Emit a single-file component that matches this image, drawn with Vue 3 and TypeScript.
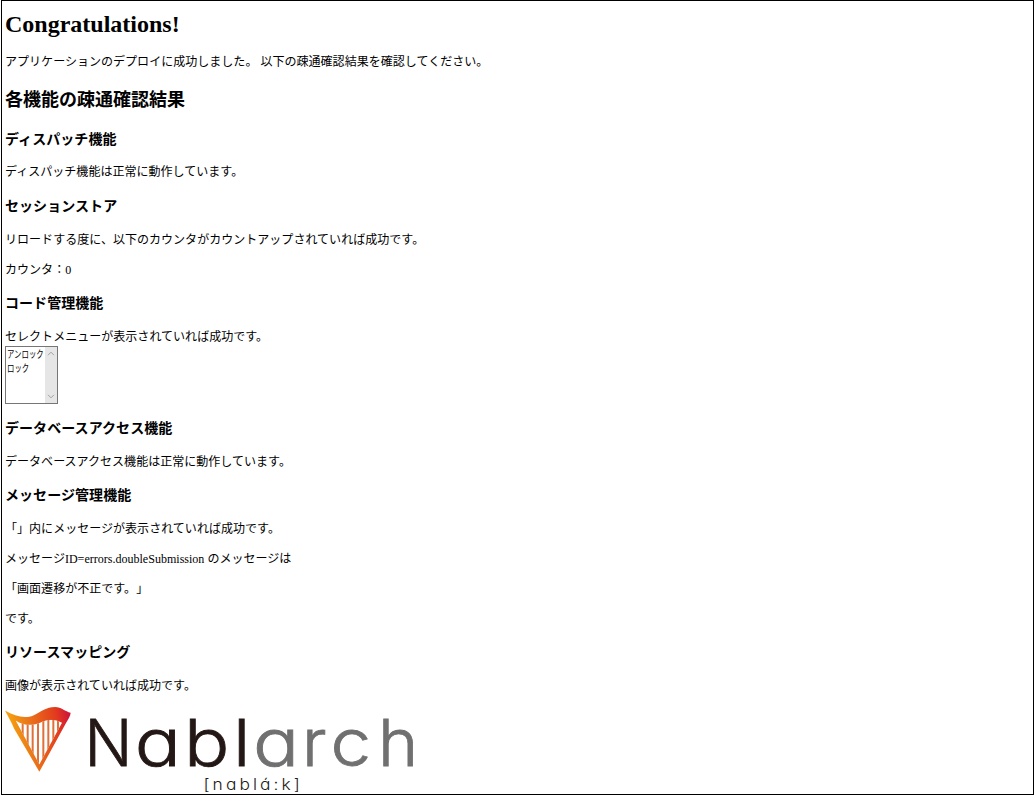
<script setup lang="ts">
interface Glyph {
  ch: string
  x: number
  stretch: number
  tone: 'dark' | 'grey'
}

const options: string[] = ['アンロック', 'ロック']

const wordmark: Glyph[] = [
  { ch: 'N', x: 84.5, stretch: 0.97, tone: 'dark' },
  { ch: 'a', x: 134.8, stretch: 1.18, tone: 'dark' },
  { ch: 'b', x: 184, stretch: 1.16, tone: 'dark' },
  { ch: 'l', x: 233, stretch: 1.15, tone: 'dark' },
  { ch: 'a', x: 253, stretch: 1.18, tone: 'grey' },
  { ch: 'r', x: 302, stretch: 1.05, tone: 'grey' },
  { ch: 'c', x: 330.5, stretch: 1.12, tone: 'grey' },
  { ch: 'h', x: 378, stretch: 1.05, tone: 'grey' },
]

const strings: number[] = [65, 80, 95, 111, 127, 142, 157, 171]
</script>

<template>
  <main class="page">
    <h1>Congratulations!</h1>
    <p class="gap-14">アプリケーションのデプロイに成功しました。 以下の疎通確認結果を確認してください。</p>
    <h2>各機能の疎通確認結果</h2>

    <h3 class="gap-17">ディスパッチ機能</h3>
    <p class="gap-13">ディスパッチ機能は正常に動作しています。</p>

    <h3 class="gap-16">セッションストア</h3>
    <p class="gap-14">リロードする度に、以下のカウンタがカウントアップされていれば成功です。</p>
    <p class="gap-12">カウンタ：0</p>

    <h3 class="gap-15">コード管理機能</h3>
    <p class="gap-14">セレクトメニューが表示されていれば成功です。</p>
    <div class="listbox">
      <ul>
        <li v-for="o in options" :key="o"><span>{{ o }}</span></li>
      </ul>
      <div class="scrollbar">
        <svg width="8" height="5" viewBox="0 0 8 5"><path d="M1 4.2 4 1.2l3 3" /></svg>
        <svg width="8" height="5" viewBox="0 0 8 5"><path d="M1 .8l3 3 3-3" /></svg>
      </div>
    </div>

    <h3 class="gap-15">データベースアクセス機能</h3>
    <p class="gap-14">データベースアクセス機能は正常に動作しています。</p>

    <h3 class="gap-15">メッセージ管理機能</h3>
    <p class="gap-14">「」内にメッセージが表示されていれば成功です。</p>
    <p class="gap-12">メッセージID=errors.doubleSubmission のメッセージは</p>
    <p class="gap-12">「画面遷移が不正です。」</p>
    <p class="gap-12">です。</p>

    <h3 class="gap-15">リソースマッピング</h3>
    <p class="gap-14">画像が表示されていれば成功です。</p>

    <svg class="logo" width="420" height="94" viewBox="0 0 420 94">
      <defs>
        <linearGradient id="frame" gradientUnits="userSpaceOnUse" x1="15" y1="60" x2="205" y2="30">
          <stop offset="0" stop-color="#f7a80c" />
          <stop offset=".4" stop-color="#e9701a" />
          <stop offset=".8" stop-color="#e23a1e" />
          <stop offset="1" stop-color="#cf1638" />
        </linearGradient>
        <clipPath id="opening">
          <path d="M47 60C70 76 98 77 122 66C145 55 165 56 186 67L118 192Z" />
        </clipPath>
      </defs>
      <g transform="translate(0 .4) scale(.33333)">
        <path d="M15 30C45 48 75 55 100 45C125 34 138 20 165 20C185 20 195 34 212 37C211 47 205 56 198 68L118 214L42 84C35 66 25 50 15 30Z" fill="url(#frame)" />
        <g clip-path="url(#opening)">
          <rect x="40" y="50" width="150" height="150" fill="#fff" />
          <rect v-for="x in strings" :key="x" :x="x" y="50" width="6" height="150" fill="#df7038" />
        </g>
      </g>
      <text
        v-for="g in wordmark"
        :key="g.x"
        class="mark"
        :class="g.tone"
        :transform="`translate(${g.x} 66) scale(${g.stretch} 1)`"
      >{{ g.ch }}</text>
      <text class="phonetic" transform="translate(203.5 89.5) scale(1.12 1)" textLength="86">[nablá:k]</text>
    </svg>
  </main>
</template>

<style>
body {
  background: #fff;
}
</style>

<style scoped>
.page {
  box-sizing: border-box;
  width: 1033px;
  height: 795px;
  margin-left: 1px;
  padding: 8px 3px 0;
  border: 1px solid #000;
  overflow: hidden;
  color: #000;
  font-family: "Liberation Serif", "Noto Sans CJK JP", serif;
  font-size: 12px;
  text-spacing-trim: space-all;
  display: flex;
  flex-direction: column;
  align-items: flex-start;
}
h1,
h2,
h3,
p,
ul {
  margin: 0;
  padding: 0;
  white-space: nowrap;
  flex: none;
}
h1 {
  font-size: 24px;
  line-height: 30px;
  height: 30px;
}
h2 {
  margin-top: 16px;
  font-size: 18px;
  line-height: 26px;
  height: 26px;
}
h3 {
  font-size: 14px;
  letter-spacing: 0.06px;
  line-height: 20px;
  height: 20px;
}
p {
  font-size: 12.04px;
  line-height: 18px;
  height: 18px;
}
.gap-12 { margin-top: 12px; }
.gap-13 { margin-top: 13px; }
.gap-14 { margin-top: 14px; }
.gap-15 { margin-top: 15px; }
.gap-16 { margin-top: 16px; }
.gap-17 { margin-top: 17px; }
.listbox {
  box-sizing: border-box;
  flex: none;
  display: flex;
  justify-content: space-between;
  width: 53px;
  height: 58px;
  border: 1px solid #767676;
}
.listbox ul {
  width: 39px;
  padding: 1px 0 0 1px;
  box-sizing: border-box;
  list-style: none;
  font-size: 10px;
}
.listbox li {
  height: 14px;
  line-height: 14px;
}
.listbox span {
  display: inline-block;
  transform: scaleX(0.74);
  transform-origin: 0 50%;
}
.scrollbar {
  box-sizing: border-box;
  flex: none;
  width: 12px;
  padding: 4px 2px;
  display: flex;
  flex-direction: column;
  justify-content: space-between;
  background: #e6e6e6;
}
.scrollbar path {
  fill: none;
  stroke: #a0a0a0;
}
.logo {
  flex: none;
  margin: 5px 0 0 -5px;
}
.mark {
  font-family: Inter, sans-serif;
  font-size: 65px;
  font-weight: 300;
  font-feature-settings: "cv11";
  stroke-width: 0.8px;
}
.dark {
  fill: #231815;
  stroke: #231815;
}
.grey {
  fill: #717071;
  stroke: #717071;
}
.phonetic {
  font-family: Inter, sans-serif;
  font-size: 15.5px;
  font-weight: 300;
  font-feature-settings: "cv11";
  fill: #231815;
}
</style>
